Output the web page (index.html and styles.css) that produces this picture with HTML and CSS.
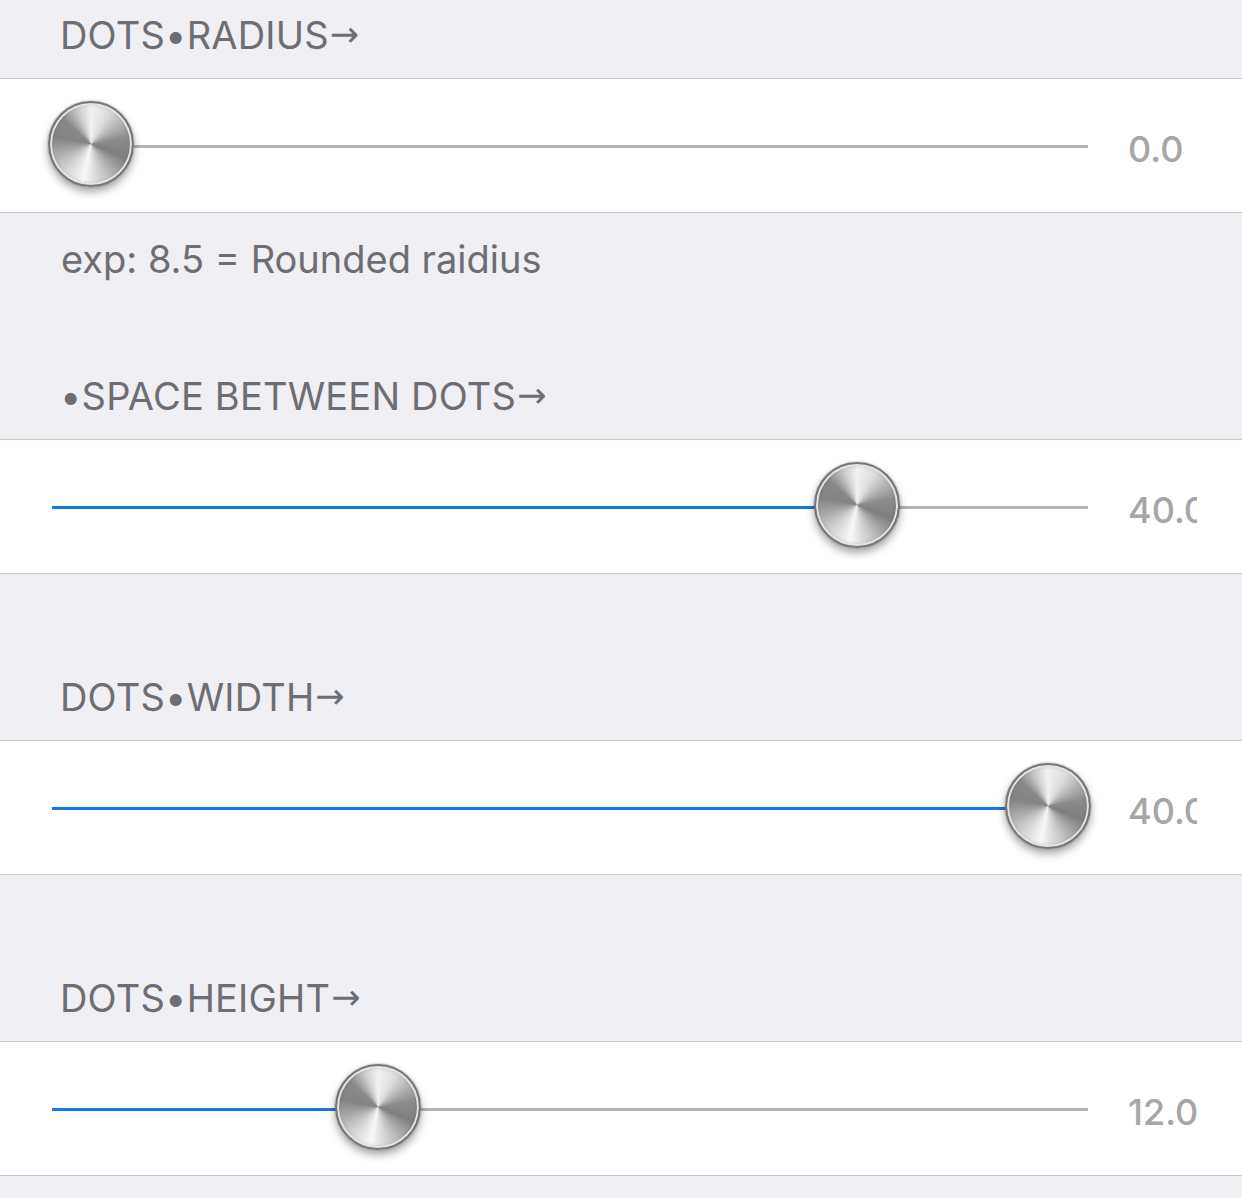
FILE: index.html
```html
<!DOCTYPE html>
<html lang="en">
<head>
  <meta charset="UTF-8" />
  <title>Dots settings</title>
  <link rel="stylesheet" href="styles.css">
</head>
<body>
  <div class="table">
    <div class="hdr">DOTS•RADIUS<span class="arr">→</span></div>
    <div class="cell">
      <div class="track" style="--p:0">
        <div class="fill"></div>
        <div class="thumb"></div>
      </div>
      <div class="val">0.0</div>
    </div>
    <div class="ftr">exp: 8.5 = Rounded raidius</div>

    <div class="hdr">•SPACE BETWEEN DOTS<span class="arr">→</span></div>
    <div class="cell">
      <div class="track" style="--p:0.8">
        <div class="fill"></div>
        <div class="thumb"></div>
      </div>
      <div class="val">40.0</div>
    </div>

    <div class="gap"></div>
    <div class="hdr">DOTS•WIDTH<span class="arr">→</span></div>
    <div class="cell">
      <div class="track" style="--p:1">
        <div class="fill"></div>
        <div class="thumb"></div>
      </div>
      <div class="val">40.0</div>
    </div>

    <div class="gap"></div>
    <div class="hdr">DOTS•HEIGHT<span class="arr">→</span></div>
    <div class="cell">
      <div class="track" style="--p:0.3">
        <div class="fill"></div>
        <div class="thumb"></div>
      </div>
      <div class="val">12.0</div>
    </div>
  </div>
</body>
</html>
```
FILE: styles.css
```css
html,body{margin:0;padding:0;background:#efeff4;font-family:Inter,"Noto Sans",sans-serif;overflow:hidden}
.table{display:flex;flex-direction:column}
.hdr{height:78px;box-sizing:border-box;display:flex;align-items:flex-end;padding:0 60px 21px;font-size:38px;line-height:44px;color:#6d6d72;letter-spacing:.2px;white-space:pre}
.arr{font-family:"DejaVu Sans",sans-serif;font-size:35px;margin-left:1px;position:relative;top:-1px}
.ftr{height:148px;box-sizing:border-box;padding:24px 61px 0;font-size:38px;line-height:44px;color:#6d6d72;letter-spacing:0}
.gap{height:88px}
.cell{height:135px;box-sizing:border-box;background:#fff;border-top:1px solid #c8c7cc;border-bottom:1px solid #c8c7cc;display:flex;align-items:center;padding-left:52px}
.track{position:relative;width:1036px;height:3px;background:#b4b4b4;margin-top:1px}
.fill{height:100%;background:#1479e6;width:calc(var(--p) * (100% - 78px) + 39px)}
.thumb{position:absolute;top:-44px;left:calc(var(--p) * (100% - 79px) - 4px);width:86px;height:86px;border-radius:50%;box-sizing:border-box;border:2px solid #767676;
  background:conic-gradient(from 0deg,#f2f2f2 0deg,#dcdcdc 30deg,#8c8c8c 80deg,#7e7e7e 112deg,#bcbcbc 150deg,#f8f8f8 192deg,#cacaca 232deg,#838383 282deg,#888 312deg,#cfcfcf 340deg,#f2f2f2 360deg);
  box-shadow:inset 0 0 0 2px #e4e4e4,inset 0 0 3px 3px rgba(0,0,0,.08),0 5px 8px rgba(0,0,0,.35),0 0 2px rgba(0,0,0,.35)}
.val{margin-left:40px;width:69px;overflow:hidden;white-space:nowrap;font-size:36px;font-weight:500;color:#a6a6a6;margin-top:6px}
```
